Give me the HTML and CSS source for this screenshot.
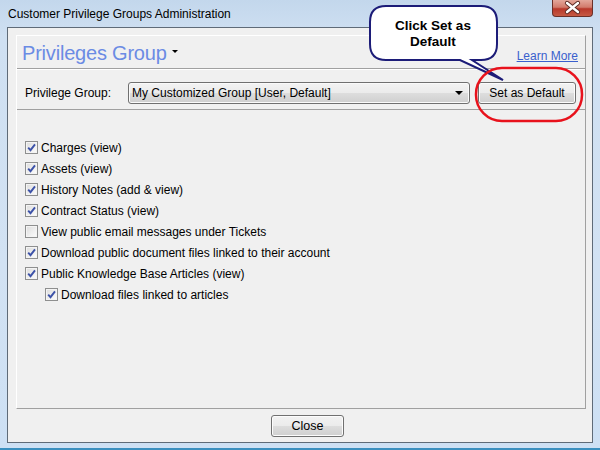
FILE: index.html
```html
<!DOCTYPE html>
<html>
<head>
<meta charset="utf-8">
<link rel="stylesheet" href="styles.css">
</head>
<body>
<div class="window">
  <div class="titlebar">
    <span class="title">Customer Privilege Groups Administration</span>
    <div class="close-x">
      <svg width="41" height="17" viewBox="0 0 41 17">
        <path d="M15 4 L26 13 M26 4 L15 13" stroke="#5a2a24" stroke-width="4.2" stroke-linecap="round"/>
        <path d="M15 4 L26 13 M26 4 L15 13" stroke="#ffffff" stroke-width="2.4" stroke-linecap="round"/>
      </svg>
    </div>
  </div>
  <div class="client">
    <div class="panel">
      <div class="panel-head">
        <span class="heading">Privileges Group</span>
        <span class="caret"></span>
        <a class="learn" href="#">Learn More</a>
      </div>
      <div class="toolbar">
        <span class="label">Privilege Group:</span>
        <div class="select">
          <span class="select-text">My Customized Group [User, Default]</span>
          <span class="select-arrow"></span>
        </div>
        <div class="btn btn-default">Set as Default</div>
      </div>
      <ul class="perms">
        <li class="perm"><span class="cb on"><svg viewBox="0 0 11 11" width="11" height="11"><path d="M2.2 5.6 L4.5 8.2 L9 2.4" fill="none" stroke="#3c52a8" stroke-width="1.9"/></svg></span><span>Charges (view)</span></li>
        <li class="perm"><span class="cb on"><svg viewBox="0 0 11 11" width="11" height="11"><path d="M2.2 5.6 L4.5 8.2 L9 2.4" fill="none" stroke="#3c52a8" stroke-width="1.9"/></svg></span><span>Assets (view)</span></li>
        <li class="perm"><span class="cb on"><svg viewBox="0 0 11 11" width="11" height="11"><path d="M2.2 5.6 L4.5 8.2 L9 2.4" fill="none" stroke="#3c52a8" stroke-width="1.9"/></svg></span><span>History Notes (add &amp; view)</span></li>
        <li class="perm"><span class="cb on"><svg viewBox="0 0 11 11" width="11" height="11"><path d="M2.2 5.6 L4.5 8.2 L9 2.4" fill="none" stroke="#3c52a8" stroke-width="1.9"/></svg></span><span>Contract Status (view)</span></li>
        <li class="perm"><span class="cb"></span><span>View public email messages under Tickets</span></li>
        <li class="perm"><span class="cb on"><svg viewBox="0 0 11 11" width="11" height="11"><path d="M2.2 5.6 L4.5 8.2 L9 2.4" fill="none" stroke="#3c52a8" stroke-width="1.9"/></svg></span><span>Download public document files linked to their account</span></li>
        <li class="perm"><span class="cb on"><svg viewBox="0 0 11 11" width="11" height="11"><path d="M2.2 5.6 L4.5 8.2 L9 2.4" fill="none" stroke="#3c52a8" stroke-width="1.9"/></svg></span><span>Public Knowledge Base Articles (view)</span></li>
        <li class="perm sub"><span class="cb on"><svg viewBox="0 0 11 11" width="11" height="11"><path d="M2.2 5.6 L4.5 8.2 L9 2.4" fill="none" stroke="#3c52a8" stroke-width="1.9"/></svg></span><span>Download files linked to articles</span></li>
      </ul>
    </div>
    <div class="footer">
      <div class="btn btn-close">Close</div>
    </div>
  </div>
  <svg class="annot" width="600" height="450" viewBox="0 0 600 450">
    <path d="M386 6 H481 Q497 6 497 22 V44 Q497 60 481 60 H472 L503 80 L460 60 H386 Q370 60 370 44 V22 Q370 6 386 6 Z" fill="#ffffff" stroke="#1c1c78" stroke-width="2"/>
    <text class="callout-text" x="433" y="30" text-anchor="middle">Click Set as</text>
    <text class="callout-text" x="433" y="46" text-anchor="middle">Default</text>
    <rect x="476" y="68" width="106" height="53" rx="26" ry="26" fill="none" stroke="#e8121c" stroke-width="2.5"/>
  </svg>
</div>
</body>
</html>
```
FILE: styles.css
```css
* { box-sizing: border-box; }
html, body {
  margin: 0;
  padding: 0;
  background: #ffffff;
}
body {
  font-family: "Liberation Sans", Arial, sans-serif;
  font-size: 12px;
  color: #000;
}
.window {
  position: relative;
  width: 600px;
  height: 450px;
  display: flex;
  flex-direction: column;
  background: linear-gradient(180deg, #c3d7ec 0%, #cfe0f2 8%, #d2e2f3 60%, #cde0f4 100%);
  border-bottom: 2px solid #3a8fbf;
}
.titlebar {
  height: 27px;
  flex: 0 0 27px;
  display: flex;
  align-items: flex-start;
  padding-left: 8px;
  position: relative;
}
.title {
  font-size: 12px;
  line-height: 12px;
  margin-top: 8px;
  color: #000;
}
.close-x {
  position: absolute;
  top: 0;
  left: 552px;
  width: 41px;
  height: 17px;
  border: 1px solid #6b3028;
  border-top: none;
  border-radius: 0 0 4px 4px;
  background: linear-gradient(180deg, #e3a79b 0%, #d27b6c 45%, #b8382a 55%, #c65a44 100%);
}
.close-x svg {
  display: block;
  margin: -1px 0 0 -1px;
}
.client {
  flex: 1;
  margin: 0 7px 5px 7px;
  border: 1px solid #5f6b78;
  background: #f0f0f0;
  display: flex;
  flex-direction: column;
  padding: 7px 6px 0 8px;
}
.panel {
  height: 374px;
  border-top: 1px solid #ffffff;
  border-left: 1px solid #ffffff;
  border-right: 1px solid #a0a0a0;
  border-bottom: 1px solid #a0a0a0;
  display: flex;
  flex-direction: column;
}
.panel-head {
  height: 33px;
  flex: 0 0 33px;
  display: flex;
  align-items: flex-start;
  padding: 7px 7px 0 5px;
  border-bottom: 1px solid #a0a0a0;
}
.heading {
  font-size: 20px;
  line-height: 20px;
  color: #6b8be4;
  letter-spacing: -0.2px;
}
.caret {
  width: 0;
  height: 0;
  margin: 7px 0 0 5px;
  border-left: 3px solid transparent;
  border-right: 3px solid transparent;
  border-top: 3px solid #000;
}
.learn {
  margin-left: auto;
  margin-top: 6px;
  color: #3a5fcd;
  font-size: 12px;
  text-decoration: underline;
}
.toolbar {
  height: 41px;
  flex: 0 0 41px;
  display: flex;
  align-items: flex-start;
  padding: 12px 7px 0 8px;
  border-top: 1px solid #ffffff;
  border-bottom: 1px solid #a0a0a0;
}
.label {
  width: 103px;
  line-height: 22px;
}
.select {
  width: 342px;
  height: 22px;
  border: 1px solid #707070;
  border-radius: 3px;
  background: linear-gradient(180deg, #f3f3f3 0%, #ebebeb 50%, #dddddd 51%, #cfcfcf 100%);
  display: flex;
  align-items: center;
  padding: 0 6px 0 3px;
  box-shadow: inset 0 0 0 1px #fafafa;
}
.select-text {
  flex: 1;
}
.select-arrow {
  width: 0;
  height: 0;
  border-left: 4px solid transparent;
  border-right: 4px solid transparent;
  border-top: 4px solid #000;
}
.btn {
  height: 22px;
  border: 1px solid #707070;
  border-radius: 3px;
  background: linear-gradient(180deg, #f2f2f2 0%, #ebebeb 50%, #dddddd 51%, #cfcfcf 100%);
  box-shadow: inset 0 0 0 1px #fcfcfc;
  display: flex;
  align-items: center;
  justify-content: center;
  font-size: 12px;
}
.btn-default {
  width: 98px;
  margin-left: 8px;
}
.perms {
  list-style: none;
  margin: 0;
  padding: 27px 0 0 8px;
}
.perm {
  height: 21px;
  display: flex;
  align-items: center;
}
.perm.sub {
  padding-left: 20px;
}
.cb {
  width: 13px;
  height: 13px;
  border: 1px solid #8e8f8f;
  background: linear-gradient(135deg, #dcdcdc 0%, #f0f0f0 60%, #fdfdfd 100%);
  box-shadow: inset 0 0 0 1px #f4f4f4;
  margin-right: 3px;
  display: flex;
  align-items: center;
  justify-content: center;
}
.cb svg {
  display: block;
}
.footer {
  flex: 1;
  display: flex;
  justify-content: flex-start;
  align-items: center;
}
.btn-close {
  width: 73px;
  margin-left: 255px;
  margin-top: 1px;
  font-size: 12.5px;
}
.annot {
  position: absolute;
  top: 0;
  left: 0;
  pointer-events: none;
}
.callout-text {
  font-family: "Liberation Sans", Arial, sans-serif;
  font-weight: bold;
  font-size: 13.5px;
  fill: #000;
}
```
